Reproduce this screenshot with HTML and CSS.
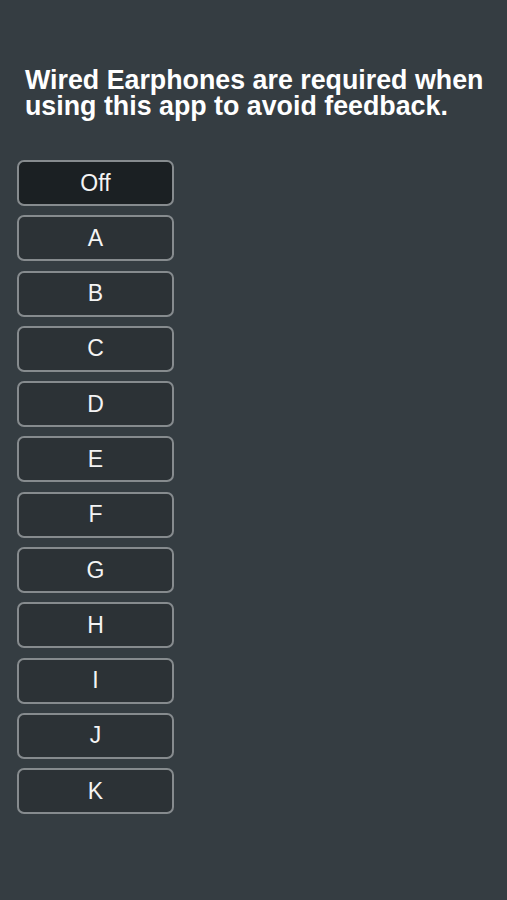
FILE: index.html
```html
<!DOCTYPE html>
<html>
<head>
<meta charset="utf-8">
<link rel="stylesheet" href="styles.css">
</head>
<body>
<div class="page">
  <h1 class="notice">Wired Earphones are required when using this app to avoid feedback.</h1>
  <div class="options">
    <button class="opt selected">Off</button>
    <button class="opt">A</button>
    <button class="opt">B</button>
    <button class="opt">C</button>
    <button class="opt">D</button>
    <button class="opt">E</button>
    <button class="opt">F</button>
    <button class="opt">G</button>
    <button class="opt">H</button>
    <button class="opt">I</button>
    <button class="opt">J</button>
    <button class="opt">K</button>
  </div>
</div>
</body>
</html>
```

FILE: styles.css
```css
html, body {
  margin: 0;
  padding: 0;
  background: #353d42;
  height: 100%;
}
.page {
  padding: 67px 0 0 25px;
  font-family: "Liberation Sans", Arial, sans-serif;
}
.notice {
  margin: 0;
  font-size: 26.8px;
  line-height: 26px;
  font-weight: bold;
  color: #ffffff;
  width: 478px;
}
.options {
  margin: 41px 0 0 -8px;
  display: flex;
  flex-direction: column;
  gap: 9.3px;
  width: 157px;
}
.opt {
  box-sizing: border-box;
  height: 46px;
  border: 2px solid #868b8e;
  border-radius: 7px;
  background: #2c3236;
  color: #f4f4f4;
  font-family: "Liberation Sans", Arial, sans-serif;
  font-size: 23px;
  padding: 0;
  text-align: center;
}
.opt.selected {
  background: #1b2023;
}
```
